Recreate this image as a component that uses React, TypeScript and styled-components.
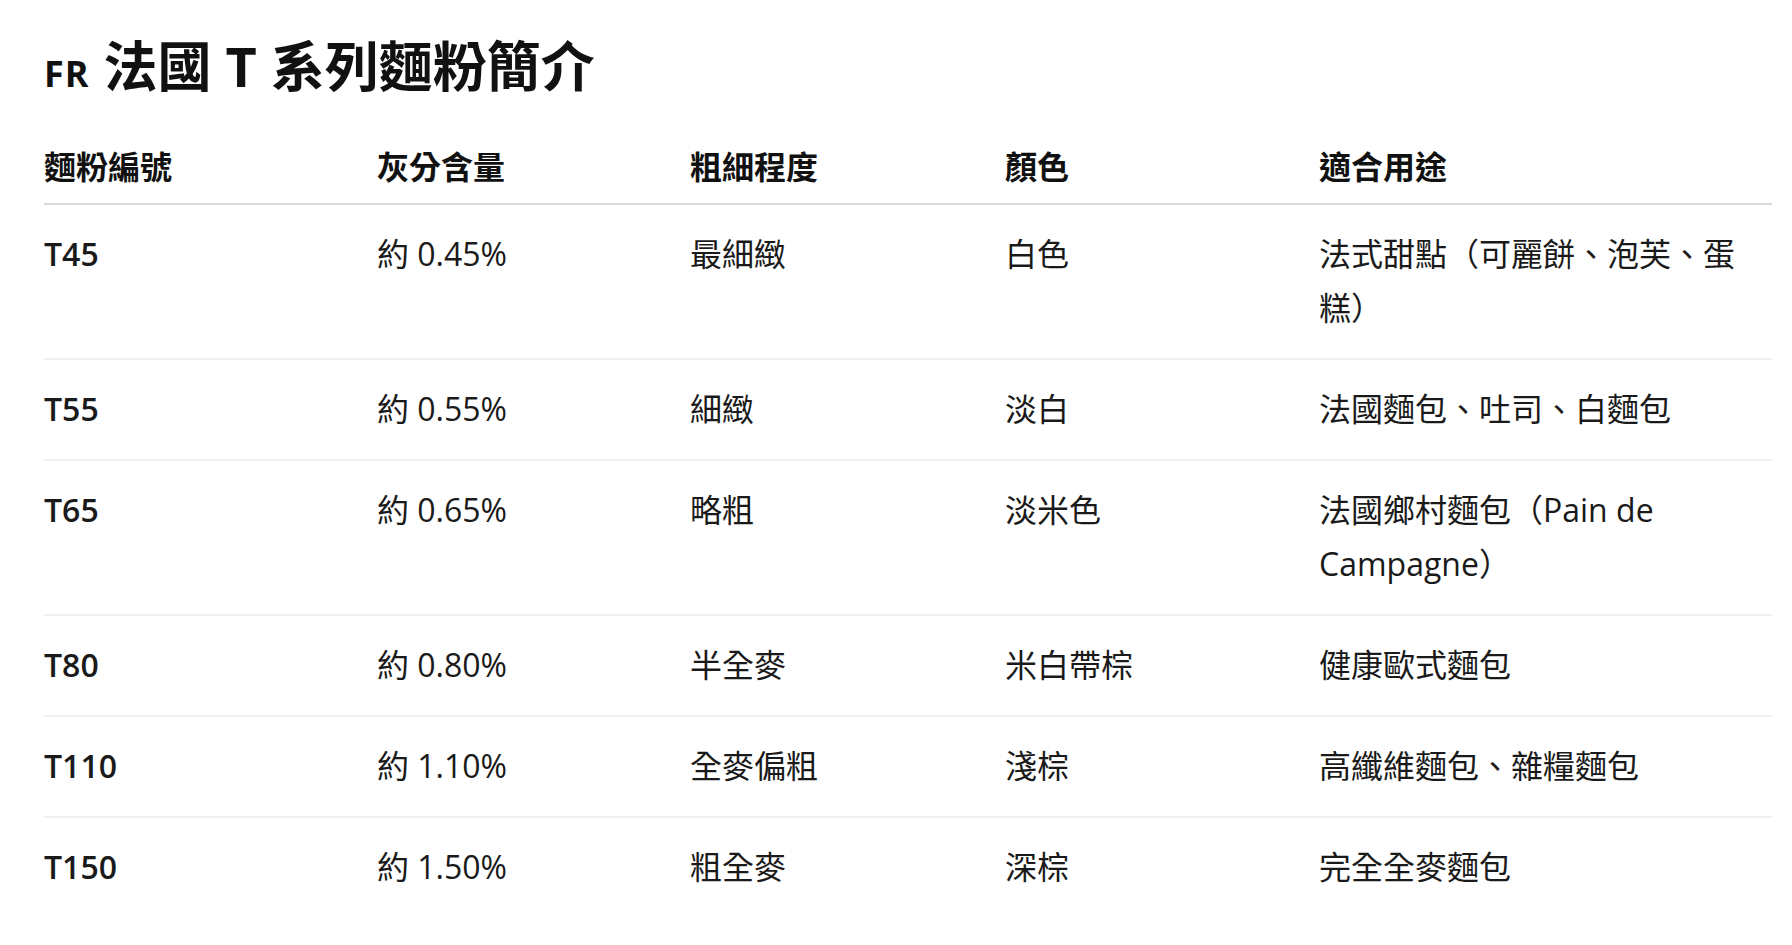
import React from "react";
import styled, { createGlobalStyle } from "styled-components";

const GlobalStyle = createGlobalStyle`
  html, body {
    margin: 0;
    padding: 0;
    background: #ffffff;
  }
  body {
    font-family: "Open Sans", "Noto Sans CJK TC", sans-serif;
    color: #1a1a1a;
    text-spacing-trim: space-all;
  }
`;

const Page = styled.div`
  padding: 33px 20px 40px 44px;
`;

const Title = styled.h1`
  margin: 0 0 24px 0;
  font-family: "Open Sans", "Noto Sans CJK TC", sans-serif;
  font-size: 54px;
  line-height: 66px;
  font-weight: 700;
  color: #111111;
  display: flex;
  align-items: baseline;
`;

const Flag = styled.span`
  font-size: 36px;
  font-weight: 700;
  letter-spacing: 1px;
  margin-right: 14px;
`;

const Table = styled.table`
  width: 1728px;
  border-collapse: collapse;
  table-layout: fixed;
`;

const HeadCell = styled.th`
  text-align: left;
  font-size: 32px;
  line-height: 54px;
  font-weight: 700;
  color: #111111;
  padding: 9px 16px 9px 0;
  border-bottom: 2px solid #d9d9d9;
`;

const Row = styled.tr<{ $last?: boolean }>`
  border-bottom: ${(p) => (p.$last ? "none" : "2px solid #f0f0f0")};
`;

const Cell = styled.td<{ $strong?: boolean }>`
  vertical-align: top;
  font-size: 32px;
  line-height: 54px;
  font-weight: ${(p) => (p.$strong ? 600 : 400)};
  color: #1a1a1a;
  padding: 22px 16px 23px 0;
`;

const rows = [
  ["T45", "約 0.45%", "最細緻", "白色", "法式甜點（可麗餅、泡芙、蛋糕）"],
  ["T55", "約 0.55%", "細緻", "淡白", "法國麵包、吐司、白麵包"],
  ["T65", "約 0.65%", "略粗", "淡米色", "法國鄉村麵包（Pain de Campagne）"],
  ["T80", "約 0.80%", "半全麥", "米白帶棕", "健康歐式麵包"],
  ["T110", "約 1.10%", "全麥偏粗", "淺棕", "高纖維麵包、雜糧麵包"],
  ["T150", "約 1.50%", "粗全麥", "深棕", "完全全麥麵包"],
];

const widths = [333, 313, 315, 314, 453];

export default function App() {
  return (
    <>
      <GlobalStyle />
      <Page>
        <Title>
          <Flag>FR</Flag>法國 T 系列麵粉簡介
        </Title>
        <Table>
          <colgroup>
            {widths.map((w, i) => (
              <col key={i} style={{ width: w }} />
            ))}
          </colgroup>
          <thead>
            <tr>
              <HeadCell>麵粉編號</HeadCell>
              <HeadCell>灰分含量</HeadCell>
              <HeadCell>粗細程度</HeadCell>
              <HeadCell>顏色</HeadCell>
              <HeadCell>適合用途</HeadCell>
            </tr>
          </thead>
          <tbody>
            {rows.map((r, i) => (
              <Row key={r[0]} $last={i === rows.length - 1}>
                {r.map((c, j) => (
                  <Cell key={j} $strong={j === 0}>
                    {c}
                  </Cell>
                ))}
              </Row>
            ))}
          </tbody>
        </Table>
      </Page>
    </>
  );
}
